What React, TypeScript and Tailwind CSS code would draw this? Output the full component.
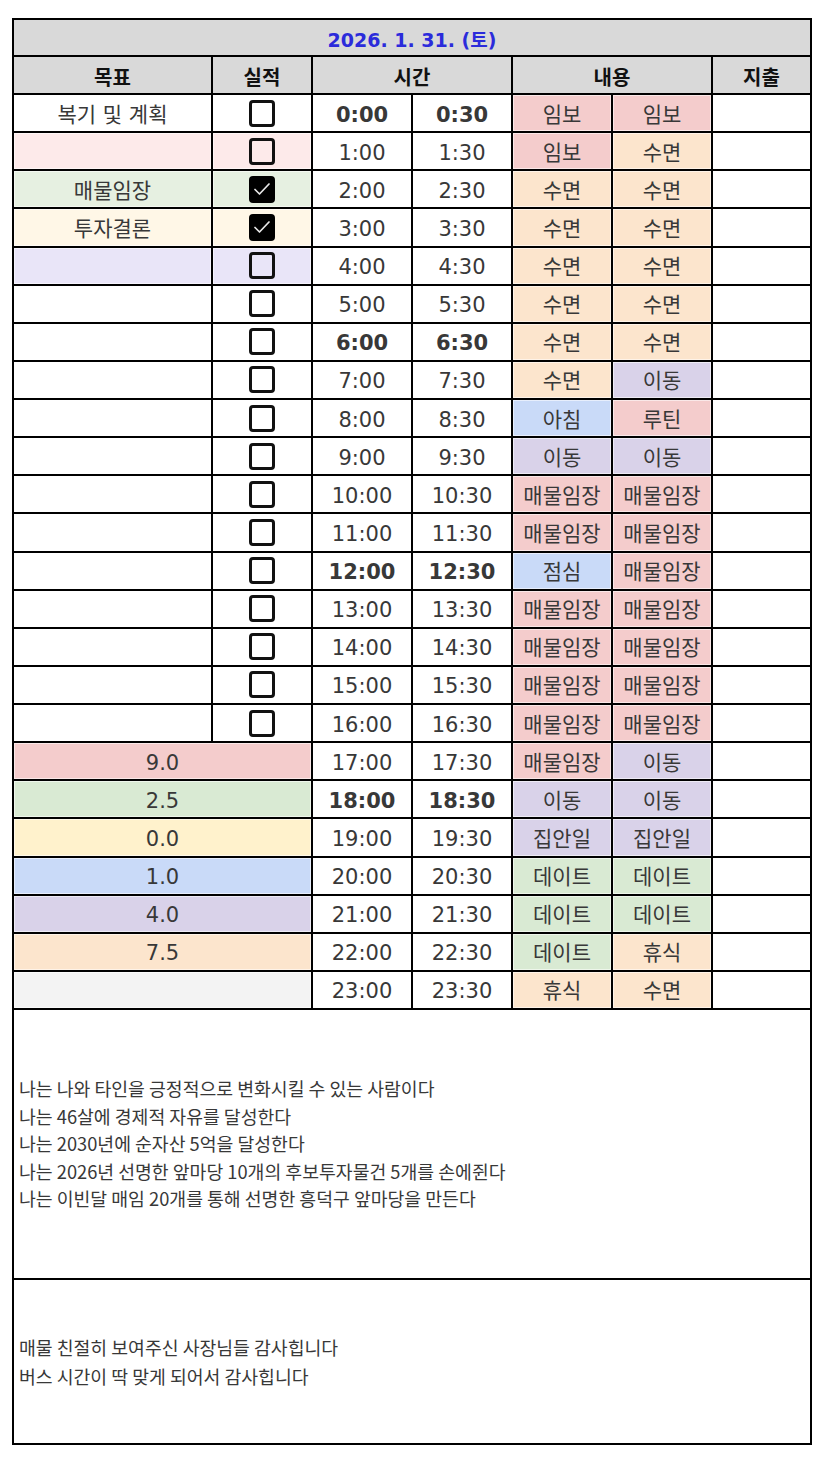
import React from "react";

const C = {
  pink: "bg-[#f4cccc]",
  peach: "bg-[#fce5cd]",
  lav: "bg-[#d9d2e9]",
  blue: "bg-[#c9daf8]",
  green: "bg-[#d9ead3]",
  yellow: "bg-[#fff2cc]",
  grey: "bg-[#f3f3f3]",
};

type Act = [string, string];
const actColor: Record<string, string> = {
  임보: C.pink,
  매물임장: C.pink,
  루틴: C.pink,
  수면: C.peach,
  휴식: C.peach,
  이동: C.lav,
  집안일: C.lav,
  아침: C.blue,
  점심: C.blue,
  데이트: C.green,
};

const acts: Act[] = [
  ["임보", "임보"],
  ["임보", "수면"],
  ["수면", "수면"],
  ["수면", "수면"],
  ["수면", "수면"],
  ["수면", "수면"],
  ["수면", "수면"],
  ["수면", "이동"],
  ["아침", "루틴"],
  ["이동", "이동"],
  ["매물임장", "매물임장"],
  ["매물임장", "매물임장"],
  ["점심", "매물임장"],
  ["매물임장", "매물임장"],
  ["매물임장", "매물임장"],
  ["매물임장", "매물임장"],
  ["매물임장", "매물임장"],
  ["매물임장", "이동"],
  ["이동", "이동"],
  ["집안일", "집안일"],
  ["데이트", "데이트"],
  ["데이트", "데이트"],
  ["데이트", "휴식"],
  ["휴식", "수면"],
];

const goals: { text: string; bg: string; checked: boolean }[] = [
  { text: "복기 및 계획", bg: "bg-white", checked: false },
  { text: "", bg: "bg-[#fdeaea]", checked: false },
  { text: "매물임장", bg: "bg-[#e6f0e1]", checked: true },
  { text: "투자결론", bg: "bg-[#fff7e7]", checked: true },
  { text: "", bg: "bg-[#e9e5f8]", checked: false },
];

const summary: { v: string; bg: string }[] = [
  { v: "9.0", bg: C.pink },
  { v: "2.5", bg: C.green },
  { v: "0.0", bg: C.yellow },
  { v: "1.0", bg: C.blue },
  { v: "4.0", bg: C.lav },
  { v: "7.5", bg: C.peach },
  { v: "", bg: C.grey },
];

const cell =
  "flex items-center justify-center pt-[4px] text-[21px] leading-none text-[#383838] shadow-[inset_0_0_0_1px_rgba(255,255,255,0.55)]";
const head =
  "bg-[#d9d9d9] flex items-center justify-center pt-[6px] text-[20px] leading-none font-bold text-[#111]";

function Checkbox({ checked }: { checked: boolean }) {
  if (checked) {
    return (
      <div className="w-[26px] h-[27px] -mt-[4px] rounded-[4px] bg-black flex items-center justify-center">
        <svg width="18" height="14" viewBox="0 0 18 14" fill="none">
          <path d="M2 7.5 L6.5 12 L16 2" stroke="#e8e8e8" strokeWidth="1.7" strokeLinecap="round" strokeLinejoin="round" />
        </svg>
      </div>
    );
  }
  return <div className="w-[26px] h-[27px] -mt-[4px] rounded-[4px] border-[3px] border-[#111]" />;
}

export default function App() {
  const boldRows = new Set([0, 6, 12, 18]);
  return (
    <div className="w-[827px] h-[1460px] bg-white font-['DejaVu_Sans','Noto_Sans_CJK_KR',sans-serif]">
      <div className="pt-[18px] pl-[12px]">
        <div className="w-[800px] grid grid-cols-[197px_98px_98px_98px_98px_98px_97px] grid-rows-[35px_36px_repeat(24,36.125px)_268px_163px] gap-[2px] p-[2px] bg-black">
          {/* Title */}
          <div className="col-span-7 bg-[#d9d9d9] flex items-center justify-center pt-[5px] leading-none text-[19px] font-bold text-[#2b2bdb]">
            2026. 1. 31. (토)
          </div>
          {/* Header */}
          <div className={head}>목표</div>
          <div className={head}>실적</div>
          <div className={`${head} col-span-2`}>시간</div>
          <div className={`${head} col-span-2`}>내용</div>
          <div className={head}>지출</div>

          {acts.map((a, i) => {
            const bold = boldRows.has(i);
            const timeCls = `${cell} bg-white ${bold ? "font-bold text-[#111]" : ""}`;
            let left: React.ReactNode;
            if (i < 17) {
              const g = goals[i] ?? { text: "", bg: "bg-white", checked: false };
              left = (
                <>
                  <div className={`${cell} ${g.bg}`}>{g.text}</div>
                  <div className={`${cell} ${g.bg}`}>
                    <Checkbox checked={g.checked} />
                  </div>
                </>
              );
            } else {
              const s = summary[i - 17];
              left = <div className={`${cell} col-span-2 ${s.bg}`}>{s.v}</div>;
            }
            return (
              <React.Fragment key={i}>
                {left}
                <div className={timeCls}>{`${i}:00`}</div>
                <div className={timeCls}>{`${i}:30`}</div>
                <div className={`${cell} ${actColor[a[0]]}`}>{a[0]}</div>
                <div className={`${cell} ${actColor[a[1]]}`}>{a[1]}</div>
                <div className="bg-white" />
              </React.Fragment>
            );
          })}

          {/* Notes */}
          <div className="col-span-7 bg-white flex flex-col justify-center pl-[5px] text-[18.3px] leading-[27.5px] text-[#383838] font-['Noto_Sans_CJK_KR',sans-serif]">
            <div>나는 나와 타인을 긍정적으로 변화시킬 수 있는 사람이다</div>
            <div>나는 46살에 경제적 자유를 달성한다</div>
            <div>나는 2030년에 순자산 5억을 달성한다</div>
            <div>나는 2026년 선명한 앞마당 10개의 후보투자물건 5개를 손에쥔다</div>
            <div>나는 이빈달 매임 20개를 통해 선명한 흥덕구 앞마당을 만든다</div>
          </div>
          <div className="col-span-7 bg-white flex flex-col justify-center pl-[5px] text-[18.3px] leading-[28.5px] text-[#383838] font-['Noto_Sans_CJK_KR',sans-serif]">
            <div>매물 친절히 보여주신 사장님들 감사힙니다</div>
            <div>버스 시간이 딱 맞게 되어서 감사힙니다</div>
          </div>
        </div>
      </div>
    </div>
  );
}
